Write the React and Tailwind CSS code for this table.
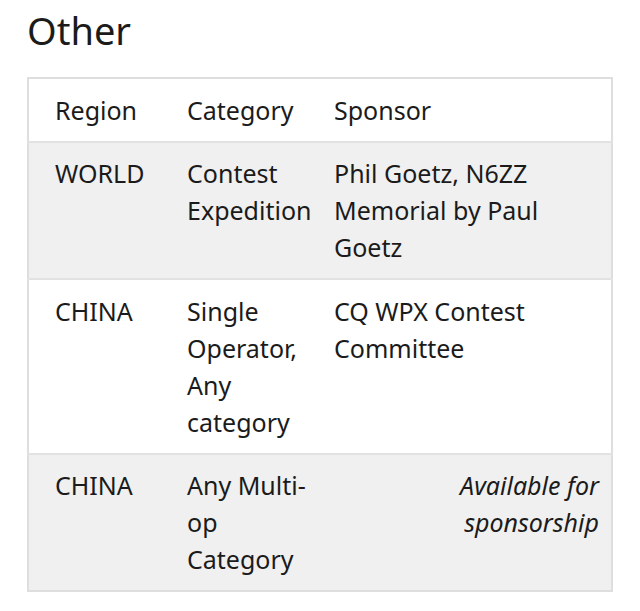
const rows = [
  {
    region: "WORLD",
    category: ["Contest", "Expedition"],
    sponsor: ["Phil Goetz, N6ZZ", "Memorial by Paul", "Goetz"],
  },
  {
    region: "CHINA",
    category: ["Single", "Operator,", "Any", "category"],
    sponsor: ["CQ WPX Contest", "Committee"],
  },
  {
    region: "CHINA",
    category: ["Any Multi-", "op", "Category"],
    sponsor: null,
  },
];

export default function App() {
  return (
    <div className="min-h-[611px] bg-white px-[27px] pt-[4px] text-[#1b1b1b] font-['Noto_Sans','Open_Sans',sans-serif]">
      <h2 className="text-[38px] leading-[52px] font-normal">Other</h2>

      <table className="mt-[21px] w-[586px] table-fixed border-collapse border-2 border-[#dedede] text-[25px] leading-[37px]">
        <thead>
          <tr className="bg-white">
            <th className="w-[146px] pt-[12.5px] pb-[12px] pl-[26px] pr-[13px] text-left font-normal">Region</th>
            <th className="w-[147px] pt-[12.5px] pb-[12px] px-[13px] text-left font-normal">Category</th>
            <th className="pt-[12.5px] pb-[12px] px-[13px] text-left font-normal">Sponsor</th>
          </tr>
        </thead>
        <tbody>
          {rows.map((row, i) => (
            <tr
              key={i}
              className={"border-t-2 border-[#e2e2e2] align-top " + (i % 2 === 0 ? "bg-[#f0f0f0]" : "bg-white")}
            >
              <td className="pt-[12.5px] pb-[12px] pl-[26px] pr-[13px]">{row.region}</td>
              <td className="pt-[12.5px] pb-[12px] px-[13px]">
                {row.category.map((line) => (
                  <div key={line} className="whitespace-nowrap">{line}</div>
                ))}
              </td>
              {row.sponsor ? (
                <td className="pt-[12.5px] pb-[12px] px-[13px]">
                  {row.sponsor.map((line) => (
                    <div key={line} className="whitespace-nowrap">{line}</div>
                  ))}
                </td>
              ) : (
                <td className="pt-[12.5px] pb-[12px] pl-[13px] pr-[12px] text-right italic">
                  Available for
                  <br />
                  sponsorship
                </td>
              )}
            </tr>
          ))}
        </tbody>
      </table>
    </div>
  );
}
